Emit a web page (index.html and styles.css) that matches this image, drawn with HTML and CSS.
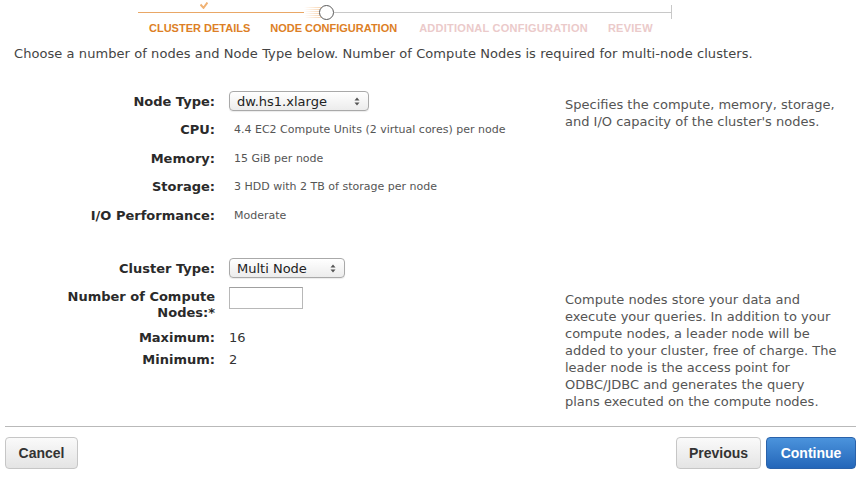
FILE: index.html
```html
<!DOCTYPE html>
<html>
<head>
<meta charset="utf-8">
<link rel="stylesheet" href="styles.css">
</head>
<body>
<div class="wizard">
  <div class="progress">
    <div class="track">
      <div class="done">
        <svg class="check" width="8" height="7" viewBox="0 0 8 7"><path d="M0.5 2.5 L3.5 5.8 L7.5 0.5" fill="none" stroke="#f0b274" stroke-width="2"/></svg>
      </div>
      <div class="glow"></div>
      <div class="current"></div>
      <div class="todo"></div>
      <div class="end"></div>
    </div>
    <div class="steps">
      <span class="step active">CLUSTER DETAILS</span>
      <span class="step active">NODE CONFIGURATION</span>
      <span class="step off">ADDITIONAL CONFIGURATION</span>
      <span class="step off">REVIEW</span>
    </div>
  </div>

  <p class="intro">Choose a number of nodes and Node Type below. Number of Compute Nodes is required for multi-node clusters.</p>

  <div class="section first">
    <div class="label">Node Type:</div>
    <div class="value"><div class="select wide">dw.hs1.xlarge<svg class="arrows" width="6" height="9" viewBox="0 0 6 9"><path d="M0.5 3.5 L3 0.5 L5.5 3.5 Z M0.5 5.5 L3 8.5 L5.5 5.5 Z" fill="#555"/></svg></div></div>
    <div class="desc d1">Specifies the compute, memory, storage, and I/O capacity of the cluster's nodes.</div>

    <div class="label">CPU:</div>
    <div class="value small">4.4 EC2 Compute Units (2 virtual cores) per node</div>

    <div class="label">Memory:</div>
    <div class="value small">15 GiB per node</div>

    <div class="label">Storage:</div>
    <div class="value small">3 HDD with 2 TB of storage per node</div>

    <div class="label">I/O Performance:</div>
    <div class="value small">Moderate</div>
  </div>

  <div class="section second">
    <div class="label r1">Cluster Type:</div>
    <div class="value r1"><div class="select narrow">Multi Node<svg class="arrows" width="6" height="9" viewBox="0 0 6 9"><path d="M0.5 3.5 L3 0.5 L5.5 3.5 Z M0.5 5.5 L3 8.5 L5.5 5.5 Z" fill="#555"/></svg></div></div>

    <div class="label two r2"><span>Number of Compute Nodes:*</span></div>
    <div class="value top r2"><input class="num" type="text"></div>
    <div class="desc d2">Compute nodes store your data and execute your queries. In addition to your compute nodes, a leader node will be added to your cluster, free of charge. The leader node is the access point for ODBC/JDBC and generates the query plans executed on the compute nodes.</div>

    <div class="label r3">Maximum:</div>
    <div class="value plain r3">16</div>

    <div class="label r4">Minimum:</div>
    <div class="value plain r4">2</div>
  </div>

  <div class="footer">
    <button class="btn">Cancel</button>
    <div class="right">
      <button class="btn">Previous</button>
      <button class="btn primary">Continue</button>
    </div>
  </div>
</div>
</body>
</html>
```

FILE: styles.css
```css
html, body {
  margin: 0;
  padding: 0;
  background: #fff;
}
body {
  font-family: "DejaVu Sans", Verdana, sans-serif;
  color: #444;
  font-size: 13px;
}
.wizard {
  width: 863px;
}
.progress {
  margin-left: 138px;
  width: 534px;
}
.track {
  display: flex;
  align-items: center;
  height: 24px;
}
.done {
  position: relative;
  width: 166px;
  height: 1px;
  background: #e9a766;
}
.check {
  position: absolute;
  left: 62px;
  top: -10px;
}
.glow {
  width: 20px;
  height: 12px;
  margin-right: -4px;
  background: repeating-linear-gradient(to bottom, rgba(240,165,90,0) 0, rgba(240,165,90,0) 1px, rgba(240,165,90,.55) 1px, rgba(240,165,90,.55) 2px);
  -webkit-mask-image: linear-gradient(to right, transparent, #000);
  mask-image: linear-gradient(to right, transparent, #000);
}
.current {
  position: relative;
  width: 13px;
  height: 13px;
  margin-left: -1px;
  border: 1.5px solid #5a5a5a;
  border-radius: 50%;
  background: #fff;
  flex: none;
}
.todo {
  flex: 1;
  height: 1px;
  background: #c8c8c8;
}
.end {
  width: 1px;
  height: 14px;
  background: #c8c8c8;
}
.steps {
  display: flex;
  padding-left: 11px;
  font-family: "Liberation Sans", Arial, sans-serif;
  font-weight: bold;
  font-size: 11px;
  line-height: 13px;
  margin-top: -2px;
  white-space: nowrap;
}
.step { margin-right: 20px; flex: none; }
.step.active { color: #dd7f26; }
.step.active + .step.off { margin-left: 2px; }
.step.off { color: #ebcaca; letter-spacing: 0.25px; }

.intro {
  margin: 11px 0 0 14px;
  line-height: 16px;
  color: #444;
  letter-spacing: 0.07px;
}

.section {
  display: grid;
  grid-template-columns: 215px 322px 1fr;
  column-gap: 14px;
}
.section.first {
  margin-top: 29px;
  grid-auto-rows: 20px;
  row-gap: 8.5px;
}
.section.second {
  margin-top: 33px;
  grid-template-rows: 20px auto auto auto 1fr;
}
.label {
  grid-column: 1;
  text-align: right;
  font-weight: bold;
  color: #2a2a2a;
  display: flex;
  align-items: center;
  justify-content: flex-end;
}
.value {
  grid-column: 2;
  display: flex;
  align-items: center;
}
.value.small {
  font-size: 11px;
  color: #555;
  padding-left: 5px;
}
.value.plain {
  color: #333;
}
.desc {
  grid-column: 3;
  color: #555;
  width: 273px;
  line-height: 17px;
}
.d1 {
  grid-row: 1 / span 3;
  padding-top: 5px;
}
.d2 {
  grid-row: 2 / 6;
  margin-top: 9px;
  padding-top: 4px;
}
.r1 { grid-row: 1; }
.r2 { grid-row: 2; margin-top: 9px; }
.r3 { grid-row: 3; margin-top: 6px; height: 20px; }
.r4 { grid-row: 4; margin-top: 2px; height: 20px; }
.label.two {
  align-items: flex-start;
  line-height: 16px;
  padding-top: 2px;
}
.label.two span {
  display: block;
  width: 150px;
}
.value.top {
  align-items: flex-start;
}

.select {
  box-sizing: border-box;
  height: 20px;
  border: 1px solid #a9a9a9;
  border-radius: 4px;
  background: linear-gradient(#ffffff, #ececec);
  box-shadow: 0 1px 1px rgba(0,0,0,.08);
  display: flex;
  align-items: center;
  justify-content: space-between;
  padding: 0 8px 0 7px;
  color: #222;
  font-size: 13px;
}
.select.wide { width: 140px; }
.select.narrow { width: 116px; }
.num {
  box-sizing: border-box;
  width: 74px;
  height: 22px;
  border: 1px solid #b8b8b8;
  border-top-color: #a0a0a0;
  margin: 0;
  padding: 0;
  background: #fff;
}

.footer {
  margin: 16px 7px 0 5px;
  border-top: 1px solid #b9b9b9;
  padding-top: 10px;
  display: flex;
  justify-content: space-between;
}
.right {
  display: flex;
  gap: 5px;
}
.btn {
  box-sizing: border-box;
  height: 32px;
  padding: 0 12px;
  border: 1px solid #c6c6c6;
  border-radius: 4px;
  background: linear-gradient(#fafafa, #e4e4e4);
  font-family: "Liberation Sans", Arial, sans-serif;
  font-weight: bold;
  font-size: 14px;
  color: #333;
}
.btn:first-child { width: 73px; }
.right .btn { width: 85px; }
.right .btn.primary {
  width: 90px;
  border-color: #2a62aa;
  background: linear-gradient(#4b93dc, #2466b9);
  color: #fff;
}
```
